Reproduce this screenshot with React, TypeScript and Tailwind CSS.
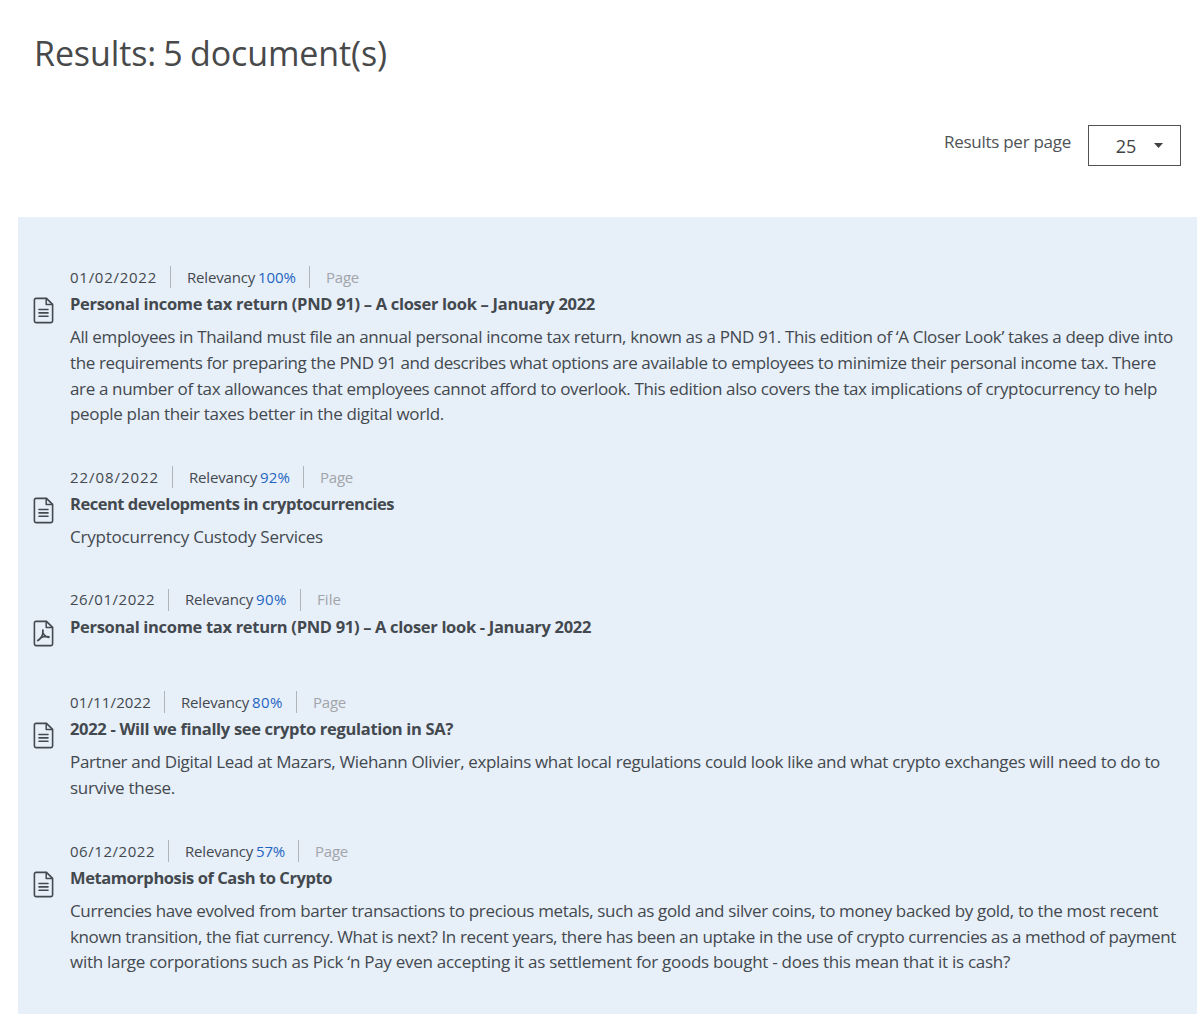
import React, { useLayoutEffect, useRef, useState } from 'react';
import clsx from 'clsx';

interface Line {
  text: string;
  // width of the set line in pixels
  width: number;
}

interface ResultDocument {
  date: Line;
  relevancy: Line;
  type: Line;
  title: Line;
  description: Line[];
}

const documents: ResultDocument[] = [
  {
    date: { text: '01/02/2022', width: 87 },
    relevancy: { text: '100%', width: 38 },
    type: { text: 'Page', width: 33 },
    title: { text: 'Personal income tax return (PND 91) – A closer look – January 2022', width: 525 },
    description: [
      { text: 'All employees in Thailand must file an annual personal income tax return, known as a PND 91. This edition of ‘A Closer Look’ takes a deep dive into', width: 1103 },
      { text: 'the requirements for preparing the PND 91 and describes what options are available to employees to minimize their personal income tax. There', width: 1086 },
      { text: 'are a number of tax allowances that employees cannot afford to overlook. This edition also covers the tax implications of cryptocurrency to help', width: 1087 },
      { text: 'people plan their taxes better in the digital world.', width: 374 },
    ],
  },
  {
    date: { text: '22/08/2022', width: 89 },
    relevancy: { text: '92%', width: 30 },
    type: { text: 'Page', width: 33 },
    title: { text: 'Recent developments in cryptocurrencies', width: 324 },
    description: [{ text: 'Cryptocurrency Custody Services', width: 253 }],
  },
  {
    date: { text: '26/01/2022', width: 85 },
    relevancy: { text: '90%', width: 31 },
    type: { text: 'File', width: 24 },
    title: { text: 'Personal income tax return (PND 91) – A closer look - January 2022', width: 521 },
    description: [],
  },
  {
    date: { text: '01/11/2022', width: 81 },
    relevancy: { text: '80%', width: 31 },
    type: { text: 'Page', width: 33 },
    title: { text: '2022 - Will we finally see crypto regulation in SA?', width: 383 },
    description: [
      { text: 'Partner and Digital Lead at Mazars, Wiehann Olivier, explains what local regulations could look like and what crypto exchanges will need to do to', width: 1090 },
      { text: 'survive these.', width: 105 },
    ],
  },
  {
    date: { text: '06/12/2022', width: 85 },
    relevancy: { text: '57%', width: 29 },
    type: { text: 'Page', width: 33 },
    title: { text: 'Metamorphosis of Cash to Crypto', width: 262 },
    description: [
      { text: 'Currencies have evolved from barter transactions to precious metals, such as gold and silver coins, to money backed by gold, to the most recent', width: 1088 },
      { text: 'known transition, the fiat currency. What is next? In recent years, there has been an uptake in the use of crypto currencies as a method of payment', width: 1106 },
      { text: 'with large corporations such as Pick ‘n Pay even accepting it as settlement for goods bought - does this mean that it is cash?', width: 940 },
    ],
  },
];

// Tracks the text so that it fills the given width
const FitText: React.FC<Line & { className?: string }> = ({ text, width, className }) => {
  const ref = useRef<HTMLSpanElement>(null);
  const [spacing, setSpacing] = useState(0);

  useLayoutEffect(() => {
    if (ref.current) {
      const current = ref.current.getBoundingClientRect().width;
      setSpacing((prev) => prev + (width - current) / text.length);
    }
  }, [text, width]);

  return (
    <span className={clsx('block whitespace-nowrap', className)}>
      <span ref={ref} style={{ letterSpacing: spacing }}>
        {text}
      </span>
    </span>
  );
};

const DocumentIcon: React.FC<{ type: string }> = ({ type }) => (
  <svg
    className="mt-[31px] h-[27px] w-[21px] shrink-0"
    viewBox="0 0 21 27"
    fill="none"
    stroke="#434a50"
    strokeWidth="1.6"
    strokeLinecap="round"
    strokeLinejoin="round"
  >
    <path d="M3 1.4H13.5L19.6 7.4V24a1.6 1.6 0 0 1-1.6 1.6H3A1.6 1.6 0 0 1 1.4 24V3A1.6 1.6 0 0 1 3 1.4Z" />
    <path d="M13.2 1.6V7.6H19.4" strokeWidth="1.5" />
    {type === 'Page' ? (
      <path d="M6 12.5H15M6 15.9H15M6 19.3H15" strokeWidth="1.6" />
    ) : (
      <>
        <path d="M9.9 10.2C10.2 13.2 9.7 15.2 8.6 16.8C7.4 18.6 6.1 19.8 4.8 20.6" strokeWidth="1.8" />
        <path d="M10.2 13.4C11.1 15.3 13 17.1 15.9 17.6M7.6 17.8C10 16.7 12.9 16.2 16.1 16.6" strokeWidth="1.4" />
      </>
    )}
  </svg>
);

const Divider: React.FC = () => <span className="ml-[13px] h-[22px] w-px bg-[#b0b5ba]" />;

const ResultItem: React.FC<{ doc: ResultDocument }> = ({ doc }) => (
  <article className="flex pb-[38.8px]">
    <DocumentIcon type={doc.type.text} />
    <div className="ml-[16px]">
      <div className="flex h-[22px] items-center text-[15px]">
        <FitText {...doc.date} />
        <Divider />
        <FitText text="Relevancy" width={68} className="ml-[16px]" />
        <FitText {...doc.relevancy} className="ml-[3px] text-[#1f66c1]" />
        <Divider />
        <FitText {...doc.type} className="ml-[16px] text-[#a2a5a9]" />
      </div>
      <h2 className="mt-[4px] h-[26px] text-[16.5px] leading-[24px] font-bold">
        <FitText {...doc.title} />
      </h2>
      <div className="mt-[6px] min-h-[6px] text-[17px] leading-[25.8px]">
        {doc.description.map((line) => (
          <FitText key={line.text} {...line} />
        ))}
      </div>
    </div>
  </article>
);

export default function App() {
  return (
    <div className="h-[1014px] overflow-hidden bg-white font-['Open_Sans',sans-serif] text-[#43494e]">
      <h1 className="h-[125px] pt-[30px] pl-[34px] text-[34px] leading-[46px] text-[#48494a] [word-spacing:-1.5px]">
        <FitText text="Results: 5 document(s)" width={353} />
      </h1>
      <div className="flex h-[92px] justify-end pr-[19px] text-[#505356]">
        <div className="mr-[17px] pt-[4px] text-[17px] leading-[26px]">
          <FitText text="Results per page" width={127} />
        </div>
        <button className="flex h-[41px] w-[93px] items-center border border-[#505356] pl-[26px] text-[18px] text-[#404346]">
          <span className="w-[22px] pt-px">25</span>
          <svg className="ml-[17px] h-[5px] w-[9px]" viewBox="0 0 9 5" fill="currentColor">
            <path d="M0 0H9L4.5 5Z" />
          </svg>
        </button>
      </div>
      <main className="mr-[3px] ml-[18px] h-[797px] bg-[#e7eff9] pt-[49px] pl-[15px]">
        {documents.map((doc) => (
          <ResultItem key={doc.title.text} doc={doc} />
        ))}
      </main>
    </div>
  );
}
